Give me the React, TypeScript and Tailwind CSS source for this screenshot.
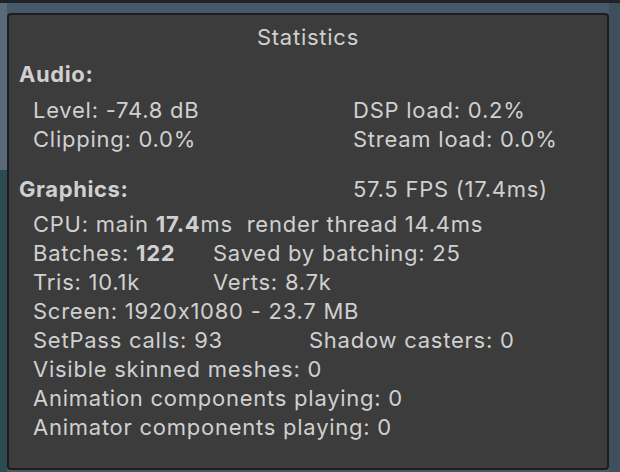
import React from 'react';

const font = { fontFamily: 'Inter, "Noto Sans", sans-serif' };

const Row = ({ children }: { children: React.ReactNode }) => (
    <div className="flex h-[29px] items-center whitespace-nowrap pl-[14px]">{children}</div>
);

export default function App() {
    return (
        <div className="flex h-[472px] w-[620px] flex-col overflow-hidden bg-[#1f2226]" style={font}>
            <div className="h-[3px]" />
            <div className="flex flex-1">
                <div className="flex w-[7px] flex-col">
                    <div className="h-[167px] bg-[#58697a]" />
                    <div className="flex-1 bg-[#2c4c52]" />
                </div>
                <div className="flex flex-1 flex-col bg-[#46596a]">
                    <div className="h-[10px]" />
                    <div className="mb-[2px] flex flex-1 flex-col rounded-[4px] border-2 border-[#1d1d1d] bg-[#3c3c3c] pl-[10px] text-[22px] tracking-[0.75px] text-[#d0d0d0]">
                        <div className="mt-[8px] flex h-[29px] items-center justify-center pr-[10px]">Statistics</div>
                        <div className="mt-[8px] flex h-[29px] items-center font-bold tracking-[0.6px]">Audio:</div>
                        <div className="mt-[7px]">
                            <Row>
                                <span className="w-[320px]">Level: -74.8 dB</span>
                                <span>DSP load: 0.2%</span>
                            </Row>
                            <Row>
                                <span className="w-[320px]">Clipping: 0.0%</span>
                                <span>Stream load: 0.0%</span>
                            </Row>
                        </div>
                        <div className="mt-[21px] flex h-[29px] items-center whitespace-nowrap">
                            <span className="w-[334px] font-bold tracking-[0.6px]">Graphics:</span>
                            <span>57.5 FPS (17.4ms)</span>
                        </div>
                        <div className="mt-[6px]">
                            <Row>
                                <span>
                                    CPU: main <b>17.4</b>ms&nbsp;&nbsp;render thread 14.4ms
                                </span>
                            </Row>
                            <Row>
                                <span className="w-[180px]">
                                    Batches: <b>122</b>
                                </span>
                                <span>Saved by batching: 25</span>
                            </Row>
                            <Row>
                                <span className="w-[180px]">Tris: 10.1k</span>
                                <span>Verts: 8.7k</span>
                            </Row>
                            <Row>
                                <span>Screen: 1920x1080 - 23.7 MB</span>
                            </Row>
                            <Row>
                                <span className="w-[276px]">SetPass calls: 93</span>
                                <span>Shadow casters: 0</span>
                            </Row>
                            <Row>
                                <span>Visible skinned meshes: 0</span>
                            </Row>
                            <Row>
                                <span>Animation components playing: 0</span>
                            </Row>
                            <Row>
                                <span>Animator components playing: 0</span>
                            </Row>
                        </div>
                    </div>
                </div>
                <div className="w-[11px] bg-[#3e4f5d]" />
            </div>
        </div>
    );
}
